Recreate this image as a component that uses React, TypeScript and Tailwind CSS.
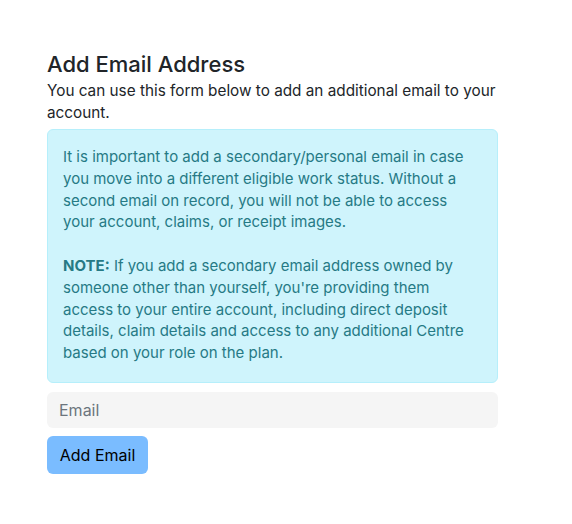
export default function App() {
  return (
    <div className="min-h-screen bg-white" style={{ fontFamily: "Inter, 'Noto Sans', sans-serif" }}>
      <div className="pl-[47px] pt-[50px] w-[498px]">
        <h2 className="text-[22px] font-medium leading-[28px] text-[#212529]">Add Email Address</h2>
        <p className="mt-[2px] text-[15.3px] leading-[22px] text-[#212529]">
          You can use this form below to add an additional email to your account.
        </p>
        <div className="mt-[5px] rounded-md border border-[#b6effb] bg-[#cff4fc] px-[15px] pt-[16px] pb-[18px] text-[15px] leading-[21.8px] text-[#267a85]">
          <p>
            It is important to add a secondary/personal email in case you move into a different eligible work
            status. Without a second email on record, you will not be able to access your account, claims, or
            receipt images.
          </p>
          <p className="mt-[21.8px]">
            <strong className="font-bold">NOTE:</strong> If you add a secondary email address owned by someone other
            than yourself, you're providing them access to your entire account, including direct deposit details,
            claim details and access to any additional Centre based on your role on the plan.
          </p>
        </div>
        <input
          type="email"
          placeholder="Email"
          className="mt-[9px] block h-[36px] w-full rounded-md bg-[#f5f5f5] px-[12px] text-[16px] text-[#212529] outline-none placeholder:text-[#6c757d]"
        />
        <button className="mt-[8px] h-[38px] w-[101px] rounded-md bg-[#7abcff] text-[16px] text-black">
          Add Email
        </button>
      </div>
    </div>
  );
}
